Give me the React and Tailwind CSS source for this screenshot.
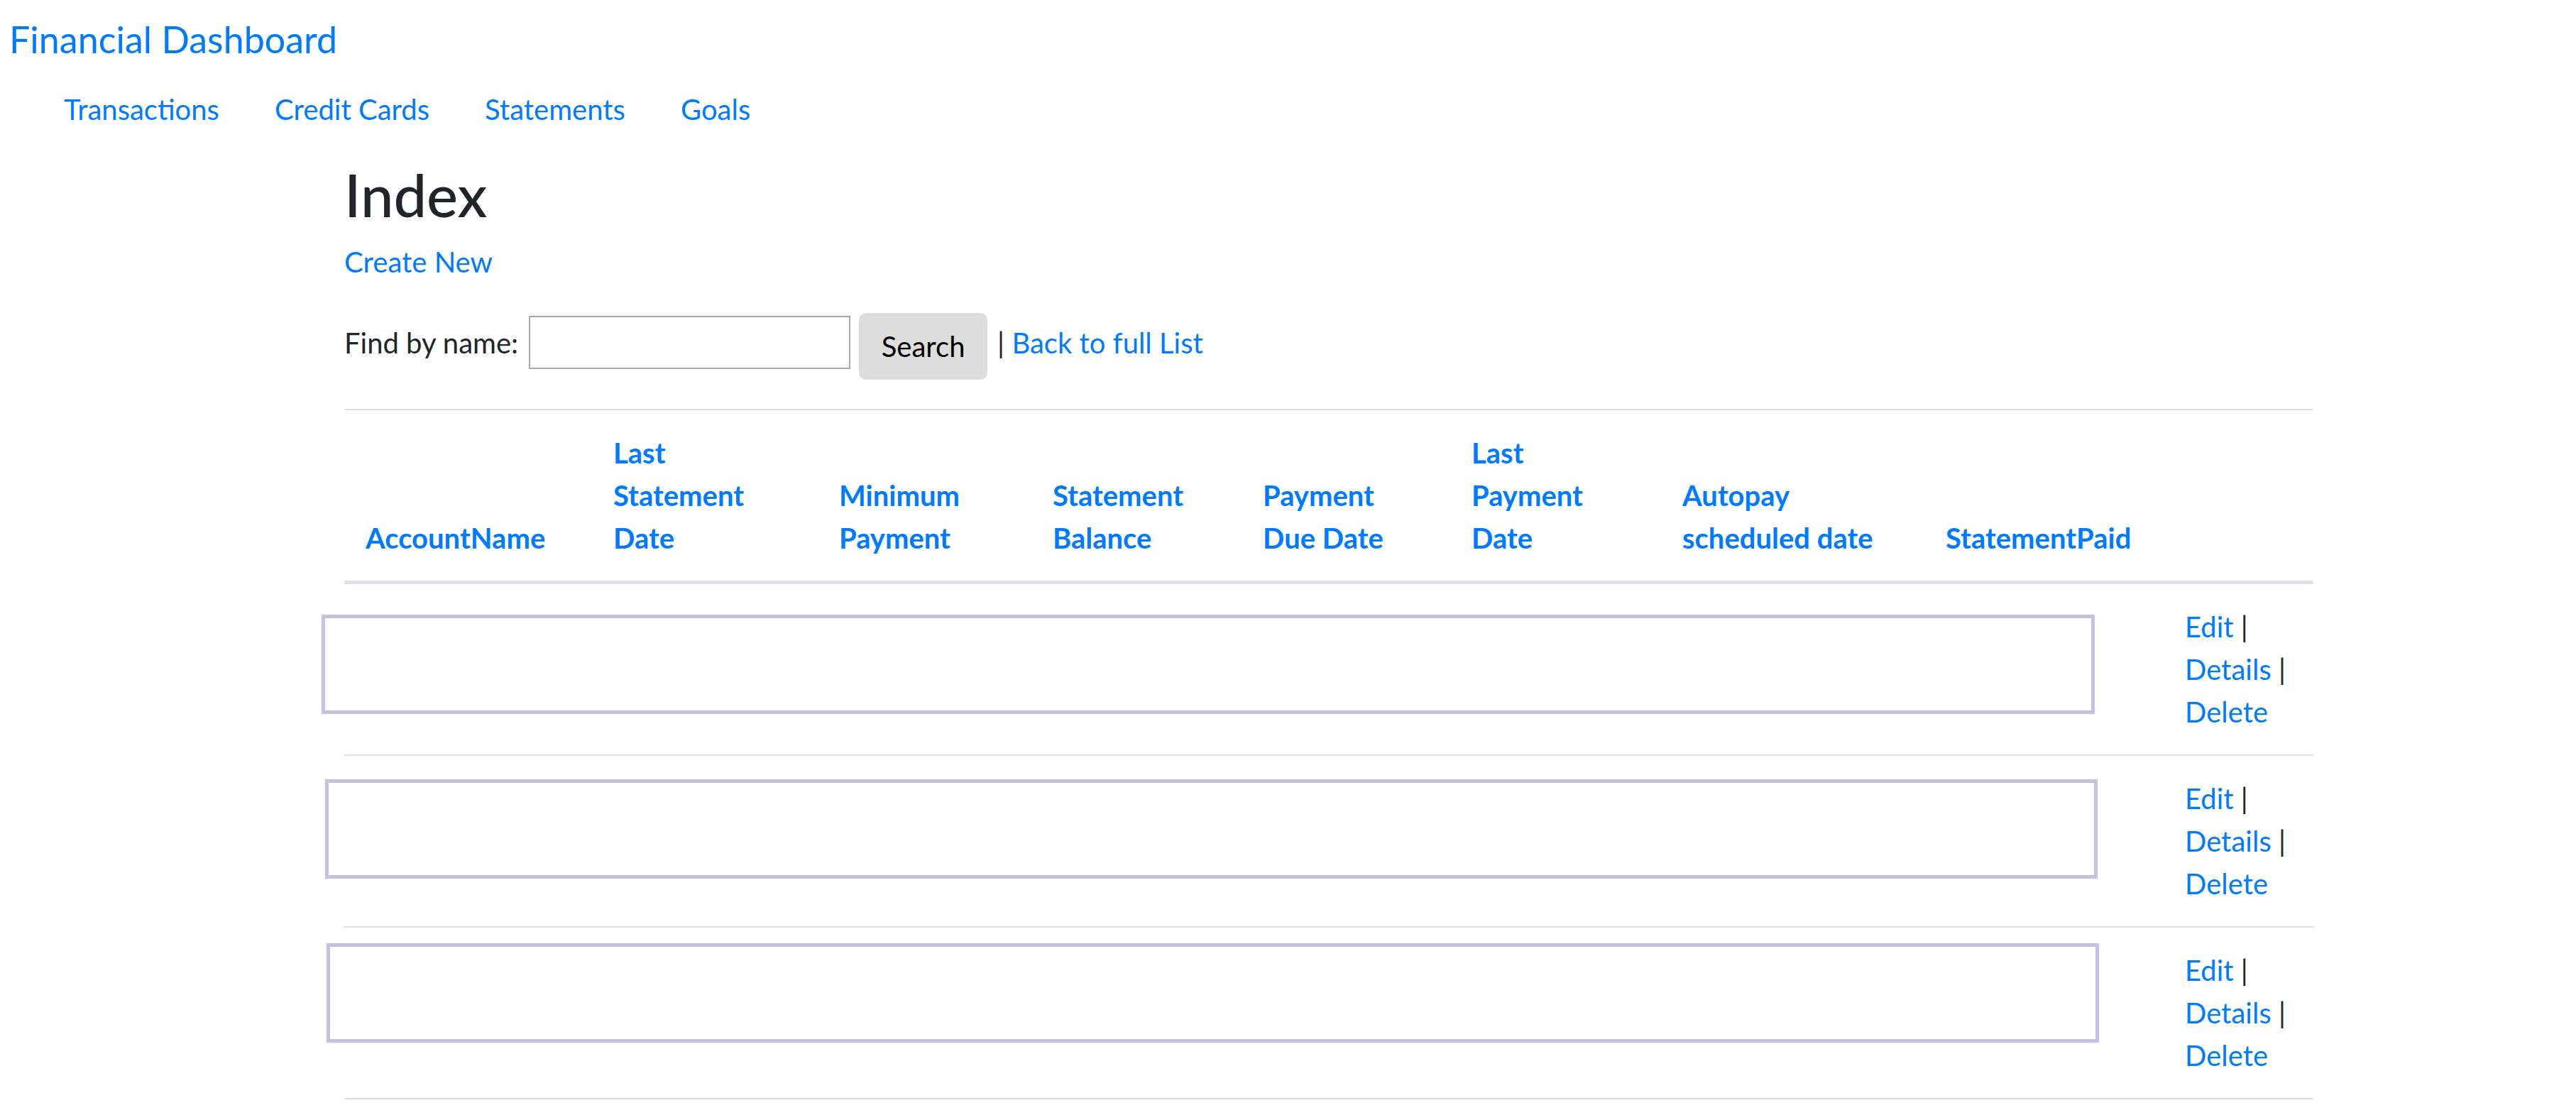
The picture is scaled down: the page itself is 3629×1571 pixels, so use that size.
import React from "react";

const cols =
  "grid grid-cols-[349px_318px_301px_296px_294px_297px_371px_337px_211px]";

const headers = [
  ["AccountName"],
  ["Last", "Statement", "Date"],
  ["Minimum", "Payment"],
  ["Statement", "Balance"],
  ["Payment", "Due Date"],
  ["Last", "Payment", "Date"],
  ["Autopay", "scheduled date"],
  ["StatementPaid"],
];

// the empty framed boxes drift a little from row to row
const rows = [
  "mt-[43px] ml-[-32px] w-[2498px]",
  "mt-[33px] ml-[-27px] w-[2497px]",
  "mt-[22px] ml-[-25px] w-[2497px]",
];

export default function App() {
  return (
    <div className="min-h-screen bg-white font-['Lato',sans-serif] text-[40px] leading-[60px] text-[#212529]">
      {/* navbar */}
      <div className="pt-[16px] pl-[13px]">
        <a href="#" className="block text-[52px] leading-[78px] text-[#007bff]">
          Financial Dashboard
        </a>
      </div>
      <nav className="mt-[30px] ml-[90px] flex gap-[78px] text-[#007bff]">
        <a href="#">Transactions</a>
        <a href="#">Credit Cards</a>
        <a href="#">Statements</a>
        <a href="#">Goals</a>
      </nav>

      <main className="ml-[485px] w-[2774px]">
        <h1 className="mt-[40px] text-[83px] leading-[100px] font-medium">Index</h1>
        <p className="mt-[15px]">
          <a href="#" className="text-[#007bff]">
            Create New
          </a>
        </p>

        {/* search */}
        <form className="mt-[42px] flex items-start">
          <label className="mt-[12px] whitespace-nowrap">Find by name:</label>
          <input
            type="text"
            className="ml-[15px] mt-[4px] h-[75px] w-[453px] border-2 border-[#a9a9a9] bg-white"
          />
          <button
            type="button"
            className="ml-[12px] flex h-[94px] w-[181px] items-center justify-center rounded-[10px] bg-[#dddddd] text-black"
          >
            Search
          </button>
          <span className="ml-[14px] mt-[12px] whitespace-nowrap">
            |{" "}
            <a href="#" className="text-[#007bff]">
              Back to full List
            </a>
          </span>
        </form>

        {/* table */}
        <div className="mt-[41px] border-t-2 border-[#dee2e6]">
          <div className={`${cols} items-end border-b-[5px] border-[#dee2e6]`}>
            {headers.map((h, i) => (
              <div key={i} className="p-[30px] font-bold text-[#007bff] whitespace-nowrap">
                {h.map((line, j) => (
                  <div key={j}>{line}</div>
                ))}
              </div>
            ))}
            <div className="p-[30px]" />
          </div>

          {rows.map((box, i) => (
            <div key={i} className={`${cols} border-b-2 border-[#dee2e6]`}>
              <div className="col-span-8">
                <div className={`${box} h-[140px] border-[5px] border-[#c5c0e4] bg-white`} />
              </div>
              <div className="p-[30px] whitespace-nowrap">
                <div>
                  <a href="#" className="text-[#007bff]">Edit</a> |
                </div>
                <div>
                  <a href="#" className="text-[#007bff]">Details</a> |
                </div>
                <div>
                  <a href="#" className="text-[#007bff]">Delete</a>
                </div>
              </div>
            </div>
          ))}
        </div>
      </main>
    </div>
  );
}
